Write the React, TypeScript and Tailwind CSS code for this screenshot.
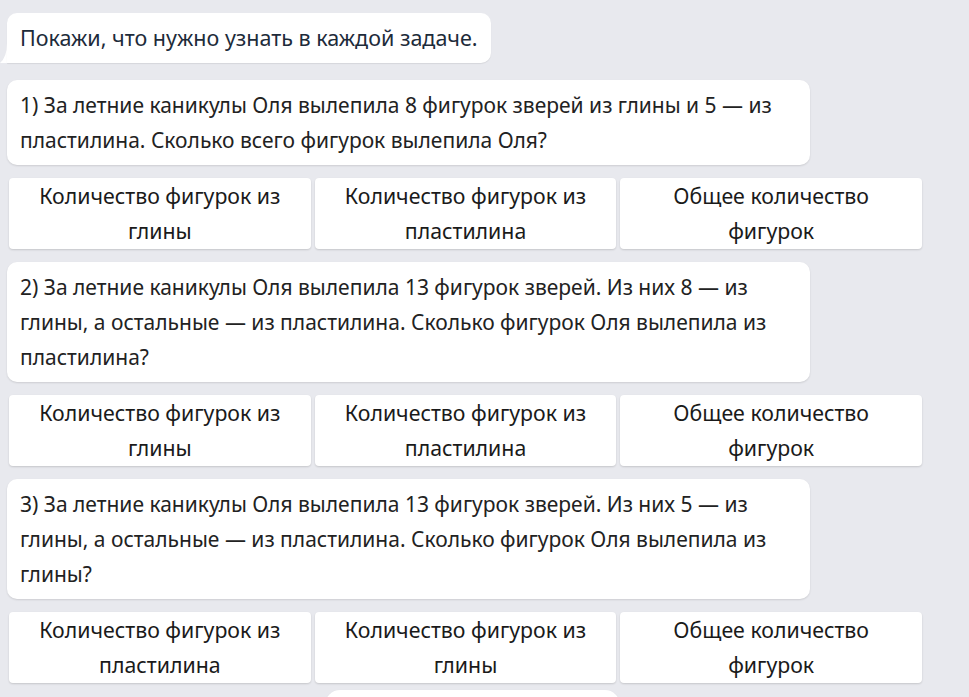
import React from 'react';

type Task = {
  text: string;
  options: string[];
};

const tasks: Task[] = [
  {
    text: '1) За летние каникулы Оля вылепила 8 фигурок зверей из глины и 5 — из пластилина. Сколько всего фигурок вылепила Оля?',
    options: ['Количество фигурок из глины', 'Количество фигурок из пластилина', 'Общее количество фигурок'],
  },
  {
    text: '2) За летние каникулы Оля вылепила 13 фигурок зверей. Из них 8 — из глины, а остальные — из пластилина. Сколько фигурок Оля вылепила из пластилина?',
    options: ['Количество фигурок из глины', 'Количество фигурок из пластилина', 'Общее количество фигурок'],
  },
  {
    text: '3) За летние каникулы Оля вылепила 13 фигурок зверей. Из них 5 — из глины, а остальные — из пластилина. Сколько фигурок Оля вылепила из глины?',
    options: ['Количество фигурок из пластилина', 'Количество фигурок из глины', 'Общее количество фигурок'],
  },
];

function Bubble() {
  return (
    <div className="relative w-fit">
      {/* tail at the bottom-left corner */}
      <svg className="absolute -left-[7px] bottom-0" width="14" height="20" viewBox="0 0 14 20">
        <path d="M14 0 L14 20 L0 20 Q7 14 7 0 Z" fill="#ffffff" />
      </svg>
      <div className="relative flex h-[50px] items-center rounded-[10px] rounded-bl-none bg-white px-[13px] text-[21.5px] text-[#1d2b3a] shadow-[0_1px_1px_rgba(0,0,0,0.08)]">
        Покажи, что нужно узнать в каждой задаче.
      </div>
    </div>
  );
}

function TaskCard({ task }: { task: Task }) {
  return (
    <div className="flex flex-col gap-[13px]">
      <div className="w-[803px] rounded-[10px] bg-white px-[13px] py-[7.5px] text-[21px] leading-[35px] text-[#222] shadow-[0_1px_2px_rgba(0,0,0,0.12)]">
        {task.text}
      </div>
      <div className="ml-[2px] flex w-[913px] gap-[4px]">
        {task.options.map((opt) => (
          <button
            key={opt}
            className="flex-1 rounded-[4px] bg-white px-[20px] pb-[1px] text-center text-[21.3px] leading-[35px] text-[#1a1a1a] shadow-[0_1px_2px_rgba(0,0,0,0.15)]"
          >
            {opt}
          </button>
        ))}
      </div>
    </div>
  );
}

export default function App() {
  return (
    <div
      className="h-[697px] w-[969px] overflow-hidden bg-[#e8e9ee] pl-[7px] pt-[13px]"
      style={{ fontFamily: '"Noto Sans", "Open Sans", sans-serif' }}
    >
      <Bubble />
      <div className="mt-[17px] flex flex-col gap-[13px]">
        {tasks.map((t, i) => (
          <TaskCard key={i} task={t} />
        ))}
        <div className="-mt-[6px] ml-[318px] h-[30px] w-[295px] shrink-0 rounded-full bg-white shadow-[0_1px_2px_rgba(0,0,0,0.12)]" />
      </div>
    </div>
  );
}
